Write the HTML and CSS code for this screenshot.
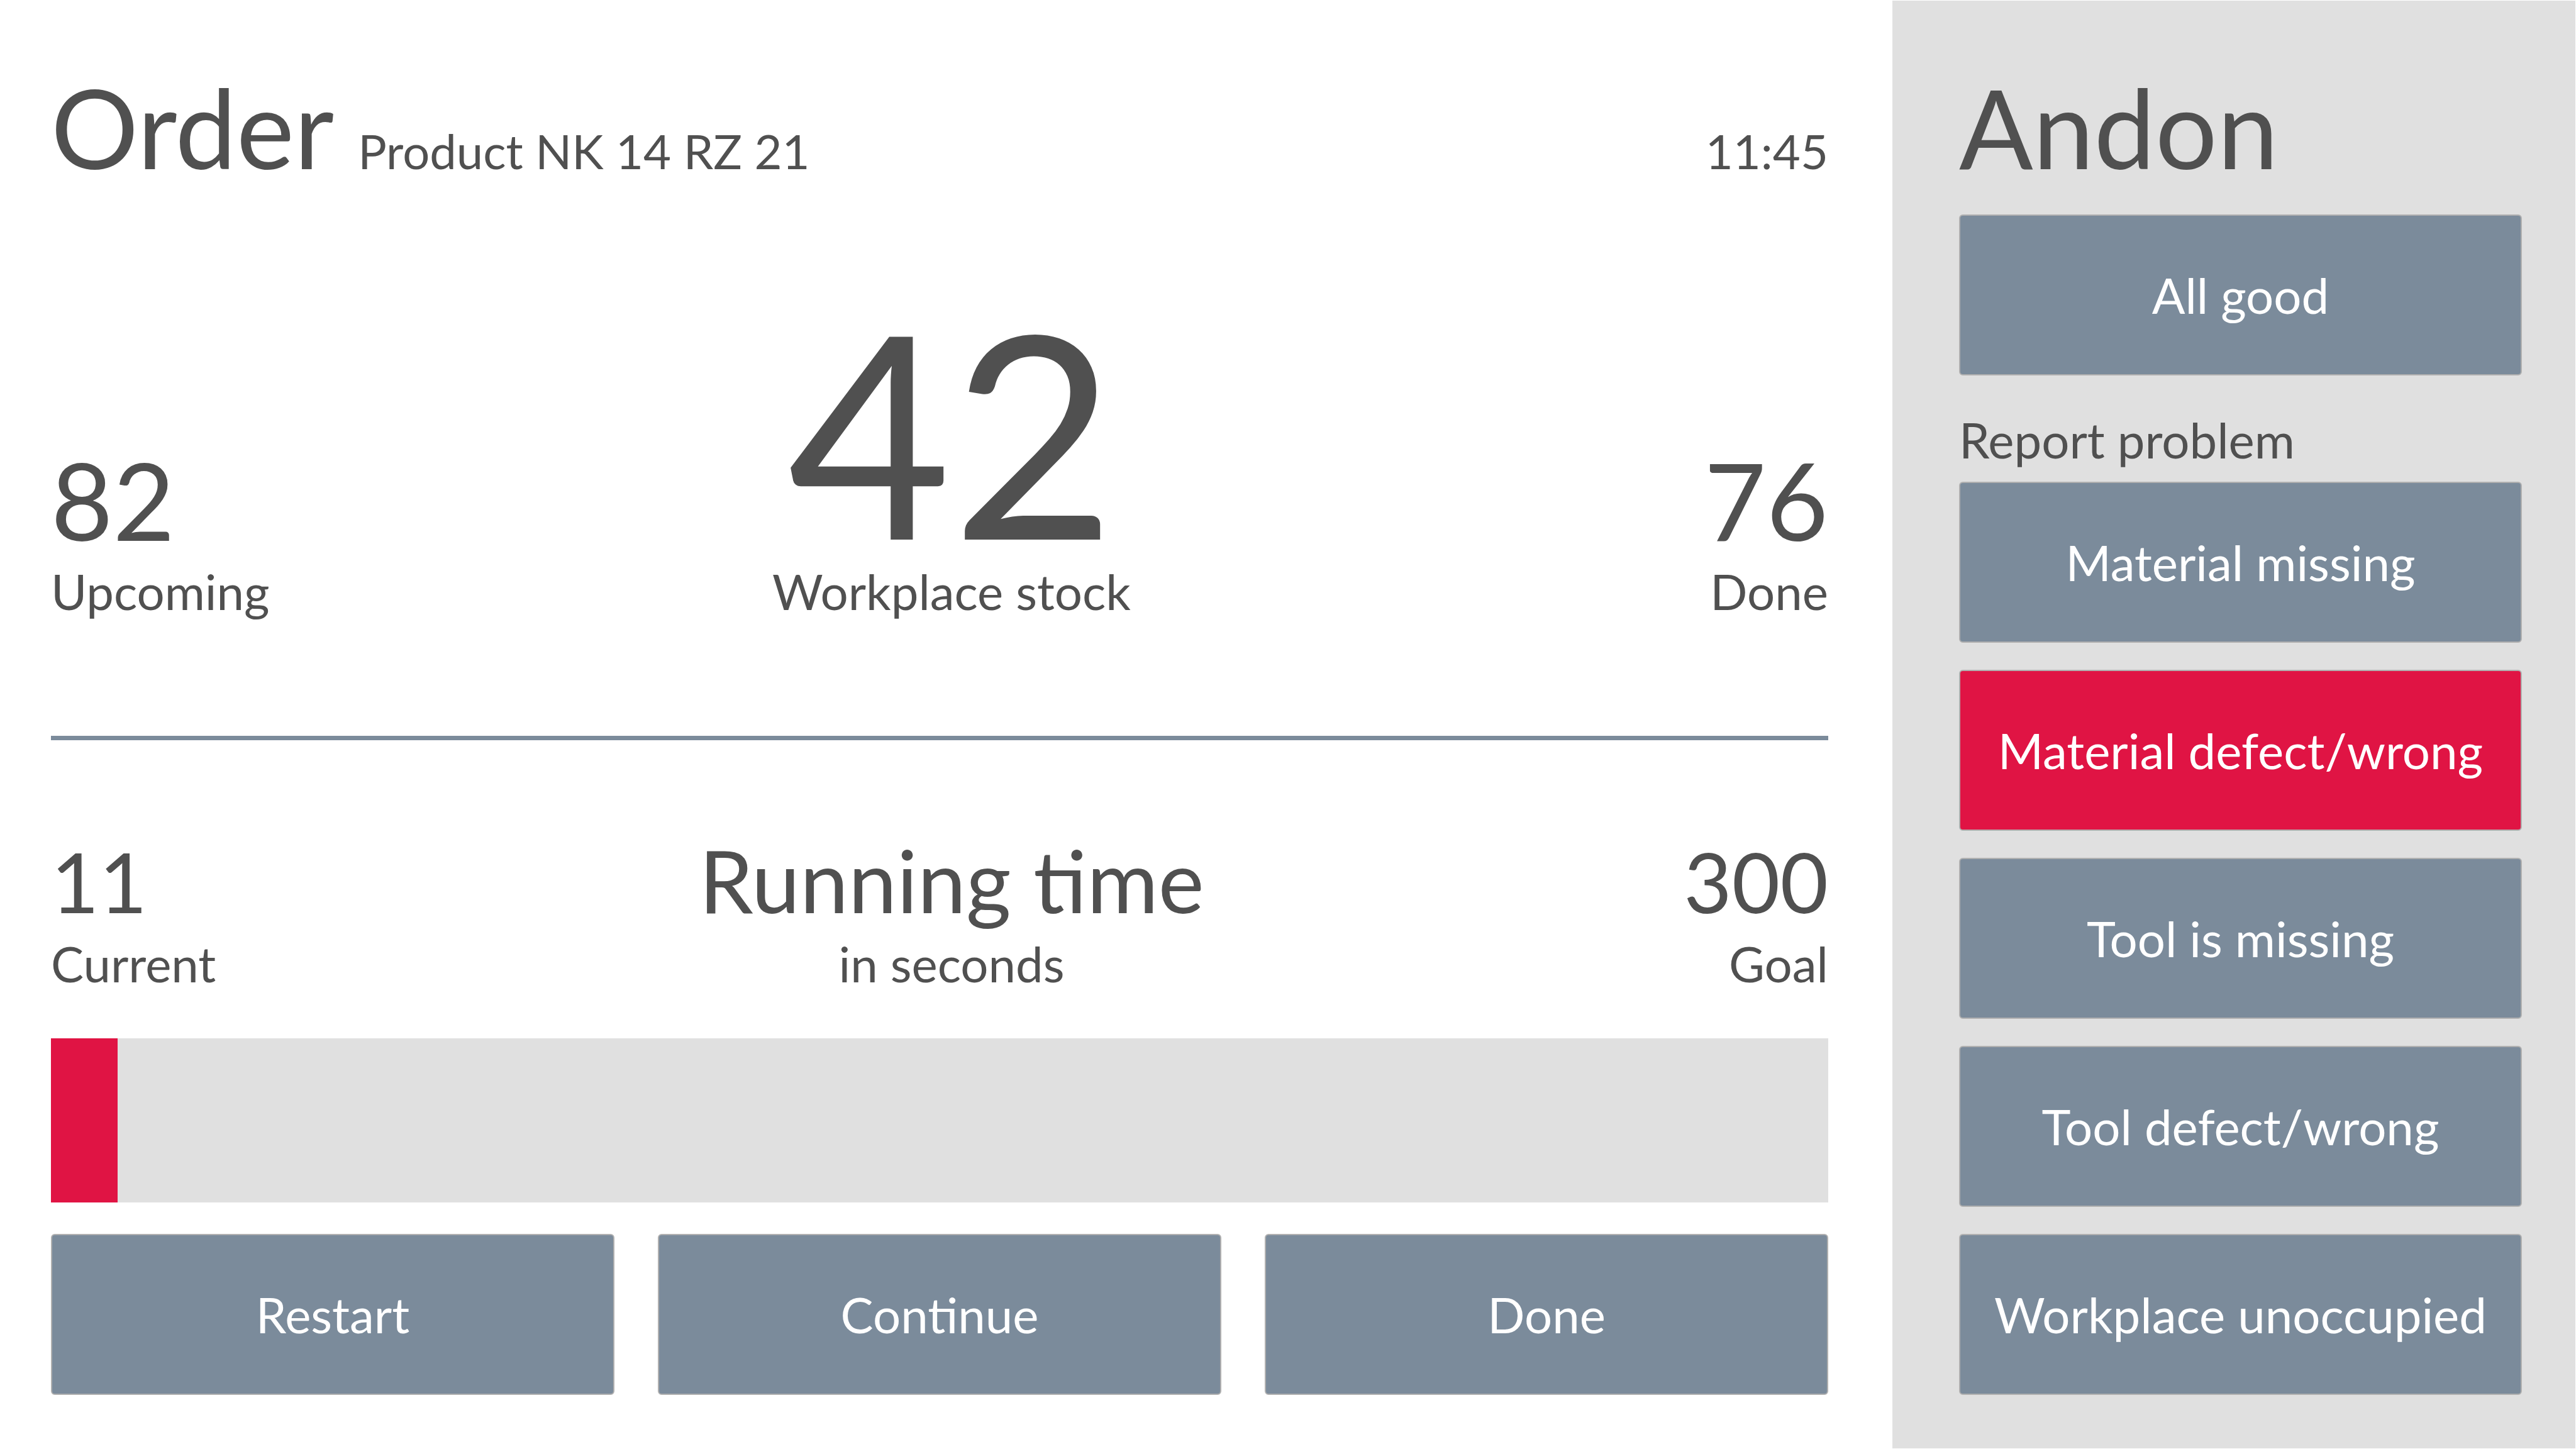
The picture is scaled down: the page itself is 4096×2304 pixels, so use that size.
FILE: index.html
```html
<!DOCTYPE html>
<html lang="en">
<head>
  <meta charset="utf-8">
  <meta name="viewport" content="width=device-width, initial-scale=1">
  <title>Order and Andon</title>
  <link rel="stylesheet" href="styles.css">
</head>
<body>
  <div class="screen">
    <main class="order">
      <header class="order-header">
        <h1 class="title">Order</h1>
        <span class="product">Product NK 14 RZ 21</span>
        <time class="clock">11:45</time>
      </header>

      <section class="figures stock">
        <div class="figure">
          <span class="value">82</span>
          <span class="caption">Upcoming</span>
        </div>
        <div class="figure figure-middle">
          <span class="value value-huge">42</span>
          <span class="caption">Workplace stock</span>
        </div>
        <div class="figure figure-end">
          <span class="value">76</span>
          <span class="caption">Done</span>
        </div>
      </section>

      <hr class="divider">

      <section class="figures timing">
        <div class="figure">
          <span class="value value-small">11</span>
          <span class="caption">Current</span>
        </div>
        <div class="figure figure-middle">
          <h2 class="heading">Running time</h2>
          <span class="caption">in seconds</span>
        </div>
        <div class="figure figure-end">
          <span class="value value-small">300</span>
          <span class="caption">Goal</span>
        </div>
      </section>

      <div class="progress" role="progressbar" aria-label="Running time" aria-valuemin="0" aria-valuenow="11" aria-valuemax="300">
        <div class="progress-fill" style="width: 3.75%"></div>
      </div>

      <div class="actions">
        <button type="button" class="button">Restart</button>
        <button type="button" class="button">Continue</button>
        <button type="button" class="button">Done</button>
      </div>
    </main>

    <aside class="andon">
      <h1 class="title">Andon</h1>
      <button type="button" class="button all-good">All good</button>
      <h2 class="caption report">Report problem</h2>
      <div class="problems">
        <button type="button" class="button">Material missing</button>
        <button type="button" class="button button-active" aria-pressed="true">Material defect/wrong</button>
        <button type="button" class="button">Tool is missing</button>
        <button type="button" class="button">Tool defect/wrong</button>
        <button type="button" class="button">Workplace unoccupied</button>
      </div>
    </aside>
  </div>
</body>
</html>
```
FILE: styles.css
```css
:root {
  --ink: #505050;
  --steel: #7b8b9b;
  --alert: #e01444;
  --panel: #e0e0e0;
  --edge: #b0b0b0;
}

* {
  box-sizing: border-box;
}

body {
  margin: 0;
  background: #fff;
  color: var(--ink);
  font-family: Lato, "Open Sans", sans-serif;
  font-size: 78px;
  line-height: 92px;
}

h1,
h2 {
  margin: 0;
  font-weight: 400;
}

.screen {
  display: grid;
  grid-template-columns: 3009fr 1087fr;
  min-height: 100vh;
}

.order {
  padding: 98px 102px 85px 81px;
}

.order-header {
  display: flex;
  align-items: baseline;
  gap: 38px;
}

.title {
  font-size: 174px;
  line-height: 208px;
}

.product,
.clock {
  font-size: 76px;
}

.clock {
  margin-left: auto;
}

.figures {
  display: grid;
  grid-template-columns: 1fr auto 1fr;
  align-items: end;
}

.stock {
  margin-top: 168px;
}

.timing {
  margin-top: 135px;
}

.figure {
  display: flex;
  flex-direction: column;
}

.figure-middle {
  align-items: center;
  padding-left: 38px;
}

.figure-end {
  align-items: flex-end;
}

.value {
  font-size: 170px;
  line-height: 200px;
}

.value-huge {
  font-size: 450px;
  line-height: 420px;
}

.value-small {
  font-size: 132px;
  line-height: 170px;
}

.heading {
  font-size: 138px;
  line-height: 174px;
}

.caption {
  font-size: 78px;
  line-height: 92px;
}

.divider {
  height: 7px;
  margin: 184px 0 0;
  border: 0;
  background: var(--steel);
}

.progress {
  height: 261px;
  margin-top: 73px;
  background: var(--panel);
}

.progress-fill {
  height: 100%;
  background: var(--alert);
}

.actions {
  display: grid;
  grid-template-columns: repeat(3, 1fr);
  gap: 69px;
  margin-top: 50px;
}

.button {
  width: 100%;
  height: 256px;
  padding: 0;
  border: 2px solid var(--edge);
  border-radius: 6px;
  background: var(--steel);
  color: #fff;
  font: inherit;
  white-space: nowrap;
}

.button-active {
  background: var(--alert);
}

.andon {
  margin: 1px 1px 1px 0;
  padding: 97px 85px 84px 106px;
  background: var(--panel);
}

.all-good {
  display: block;
  margin-top: 35px;
}

.report {
  margin-top: 56px;
}

.problems {
  display: grid;
  gap: 43px;
  margin-top: 21px;
}
```
